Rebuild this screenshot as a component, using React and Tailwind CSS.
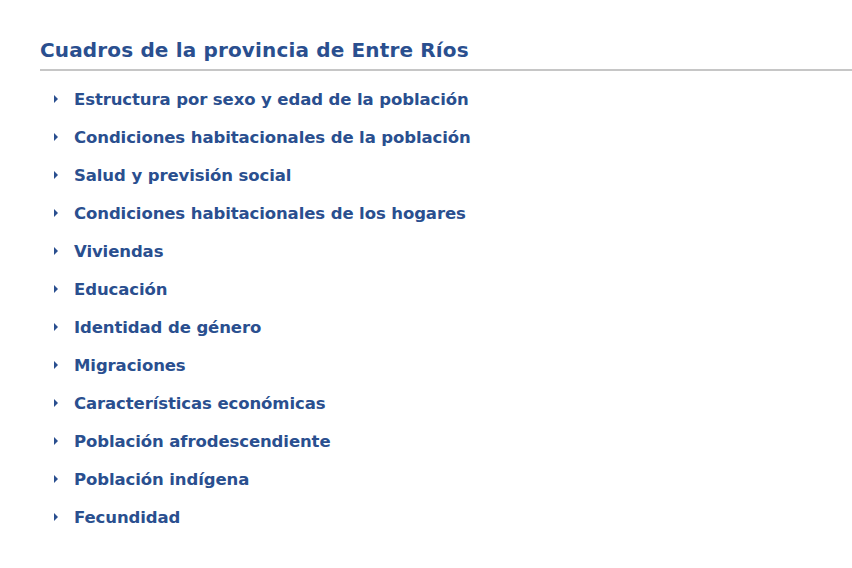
import React from 'react';

const items = [
  'Estructura por sexo y edad de la población',
  'Condiciones habitacionales de la población',
  'Salud y previsión social',
  'Condiciones habitacionales de los hogares',
  'Viviendas',
  'Educación',
  'Identidad de género',
  'Migraciones',
  'Características económicas',
  'Población afrodescendiente',
  'Población indígena',
  'Fecundidad',
];

export default function App() {
  return (
    <div className="min-h-[568px] bg-white pl-10 pt-[37px]" style={{ fontFamily: '"DejaVu Sans", sans-serif' }}>
      <h2 className="text-[20px] font-bold leading-[26px] text-[#2a4f8f] tracking-[0.15px]">
        Cuadros de la provincia de Entre Ríos
      </h2>
      <div className="mt-[6px] h-[2px] bg-[#c6c6c6]" />
      <ul className="mt-[18px] flex flex-col gap-[16px] pl-[14px]">
        {items.map((t) => (
          <li key={t} className="flex items-center gap-[16px] h-[22px]">
            <svg width="4" height="8" viewBox="0 0 4 8" className="shrink-0 -mt-[3px]">
              <path d="M0 0 L4 4 L0 8 Z" fill="#2a4f8f" />
            </svg>
            <span className="text-[16.5px] font-semibold text-[#2a4f8f] tracking-[-0.1px]">{t}</span>
          </li>
        ))}
      </ul>
    </div>
  );
}
